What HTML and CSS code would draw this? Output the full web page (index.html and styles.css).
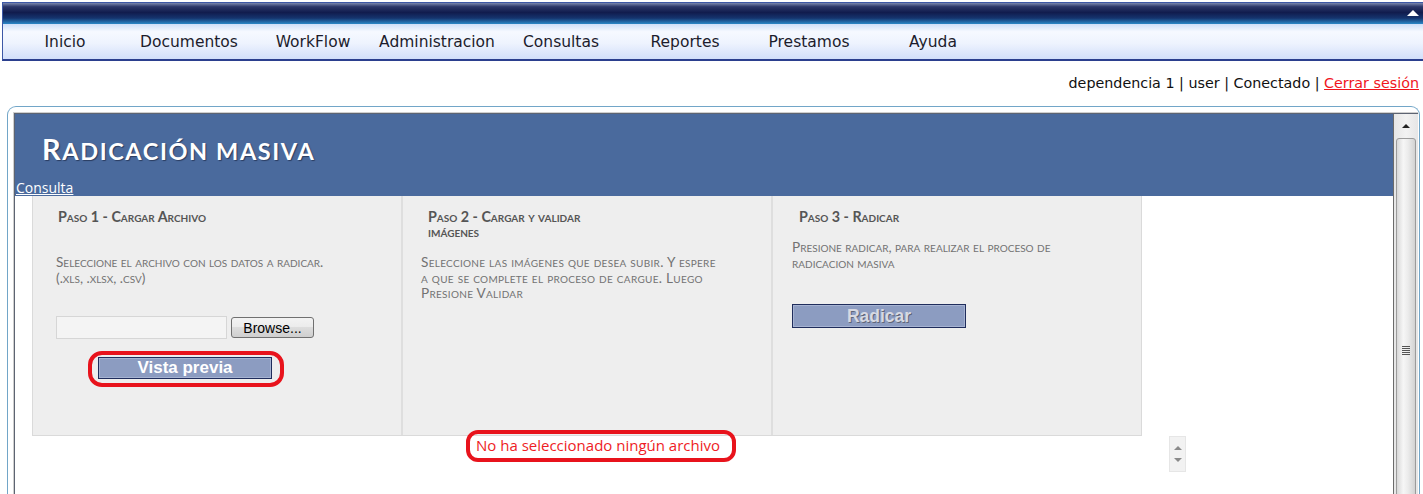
FILE: index.html
```html
<!DOCTYPE html>
<html lang="es">
<head>
<meta charset="utf-8">
<title>Radicación masiva</title>
<link rel="stylesheet" href="styles.css">
</head>
<body>
<div class="topbar">
  <div class="topbar-strip"><span class="collapse"></span></div>
  <nav class="menu">
    <a href="#">Inicio</a>
    <a href="#">Documentos</a>
    <a href="#">WorkFlow</a>
    <a href="#">Administracion</a>
    <a href="#">Consultas</a>
    <a href="#">Reportes</a>
    <a href="#">Prestamos</a>
    <a href="#">Ayuda</a>
  </nav>
</div>
<div class="userbar">dependencia 1 | user | Conectado | <a class="logout" href="#">Cerrar sesión</a></div>
<div class="panel">
  <div class="frame">
    <div class="frame-in">
      <div class="content">
        <header class="page-head">
          <h1 class="title"><span class="cap">R</span>adicación masiva</h1>
          <a class="consulta" href="#">Consulta</a>
        </header>
        <div class="steps">
          <section class="step step1">
            <h2 class="step-title">Paso 1 - Cargar Archivo</h2>
            <p class="step-desc">Seleccione el archivo con los datos a radicar.<br>(.xls, .xlsx, .csv)</p>
            <div class="file-row">
              <span class="file-box"></span>
              <button class="browse" type="button">Browse...</button>
            </div>
            <div class="annot">
              <button class="btn" type="button">Vista previa</button>
            </div>
          </section>
          <section class="step step2">
            <h2 class="step-title">Paso 2 - Cargar y validar<br>imágenes</h2>
            <p class="step-desc wide">Seleccione las imágenes que desea subir. Y espere<br>a que se complete el proceso de cargue. Luego<br>Presione Validar</p>
          </section>
          <section class="step step3">
            <h2 class="step-title">Paso 3 - Radicar</h2>
            <p class="step-desc">Presione radicar, para realizar el proceso de<br>radicacion masiva</p>
            <button class="btn btn-disabled" type="button">Radicar</button>
          </section>
        </div>
        <div class="status-row">
          <div class="msg-cell"><span class="msg">No ha seleccionado ningún archivo</span></div>
          <div class="spinner">
            <span class="sp-up"></span>
            <span class="sp-down"></span>
          </div>
        </div>
      </div>
      <div class="vscroll">
        <div class="vs-btn"><span class="vs-arrow"></span></div>
        <div class="vs-thumb"><span class="grip"></span></div>
      </div>
    </div>
  </div>
</div>
</body>
</html>
```
FILE: styles.css
```css
* { box-sizing: border-box; }
html, body { margin: 0; height: 494px; overflow: hidden; }
body { background: #fff; font-family: "DejaVu Sans", sans-serif; color: #111; }

/* ---------- top bar ---------- */
.topbar {
  margin: 2px 0 0 2px;
  border-top: 1px solid #3d58a6;
  border-left: 1px solid #3d58a6;
  border-bottom: 2px solid #2b3f8e;
}
.topbar-strip {
  height: 21px;
  background: linear-gradient(#7885ad 0, #2b3769 18%, #111c4d 45%, #15346e 72%, #2b88c8 100%);
  display: flex;
  justify-content: flex-end;
  align-items: center;
  padding-right: 4px;
}
.collapse {
  width: 0; height: 0;
  border-left: 6px solid transparent;
  border-right: 6px solid transparent;
  border-bottom: 6px solid #fff;
  margin-bottom: 2px;
}
.menu {
  height: 35px;
  padding-top: 1px;
  background: linear-gradient(#cfdff9 0, #f6f9ff 22%, #eef3fe 55%, #d2dffa 100%);
  display: grid;
  grid-template-columns: repeat(8, 124px);
  align-items: center;
}
.menu a {
  text-align: center;
  font-size: 15.5px;
  color: #1c1c2c;
  text-decoration: none;
}

/* ---------- user bar ---------- */
.userbar {
  height: 45px;
  line-height: 45px;
  text-align: right;
  padding-right: 4px;
  font-size: 14.3px;
  color: #111;
}
.logout { color: #f0151d; }

/* ---------- panel ---------- */
.panel {
  margin: 0 3px 0 7px;
  border: 1px solid #72a6c8;
  border-bottom: none;
  border-radius: 9px 9px 0 0;
  padding: 5px 1px 0 5px;
}
.frame {
  border-top: 1px solid #cfcfcf;
  border-left: 1px solid #cfcfcf;
}
.frame-in {
  display: flex;
  height: 400px;
  border-top: 1px solid #5d6472;
  border-left: 1px solid #5d6472;
}
.content { flex: 1; min-width: 0; }

.page-head {
  height: 82px;
  background: #4a6a9d;
  display: flex;
  flex-direction: column;
  align-items: flex-start;
  padding-top: 18px;
}
.title {
  margin: 0 0 0 27px;
  font-family: Lato, sans-serif;
  font-weight: 700;
  font-size: 23.5px;
  line-height: 34px;
  letter-spacing: 1.6px;
  text-transform: uppercase;
  color: #fff;
  text-shadow: 1px 1px 1px #2a3c60;
}
.title .cap { font-size: 29px; }
.consulta {
  margin-top: auto;
  margin-left: 1px;
  font-family: "Open Sans", sans-serif;
  font-size: 14px;
  line-height: 17px;
  color: #fff;
}

/* ---------- steps ---------- */
.steps {
  margin-left: 17px;
  width: 1110px;
  height: 240px;
  display: grid;
  grid-template-columns: 370px 370px 370px;
  background: #eeeeee;
  border: 1px solid #dadada;
  border-top: none;
}
.step {
  border-right: 2px solid #dedede;
  font-family: Lato, sans-serif;
}
.step:last-child { border-right: none; }
.step-title {
  margin: 13px 0 0;
  font-size: 14.3px;
  line-height: 15px;
  font-weight: 700;
  font-variant: small-caps;
  color: #555;
}
.step-desc {
  margin: 31px 0 0;
  font-size: 13.6px;
  line-height: 15.5px;
  font-variant: small-caps;
  color: #727272;
}
.step-desc.wide { letter-spacing: 0.3px; }
.step1 { padding-left: 23px; }
.step1 .step-title { margin-left: 2px; }
.step2 { padding-left: 18px; }
.step2 .step-desc { margin-top: 16px; }
.step2 .step-title { margin-left: 7px; }
.step3 { padding-left: 19px; }
.step3 .step-title { margin-left: 7px; }
.step3 .step-desc { margin-top: 16px; }

.file-row {
  margin-top: 30px;
  display: flex;
  align-items: center;
  gap: 4px;
}
.file-box {
  width: 171px;
  height: 23px;
  background: #f4f4f4;
  border: 1px solid #d6d6d6;
}
.browse {
  width: 83px;
  height: 21px;
  padding: 0;
  border: 1px solid #707070;
  border-radius: 3px;
  background: linear-gradient(#f3f3f3, #ebebeb 50%, #dddddd 50%, #cfcfcf);
  font-family: "Liberation Sans", sans-serif;
  font-size: 14px;
  color: #000;
}
.annot {
  display: inline-block;
  margin: 12px 0 0 32px;
  padding: 2px 8px 4px 6px;
  border: 4px solid #e8131c;
  border-radius: 14px;
}
.btn {
  display: block;
  width: 174px;
  height: 22px;
  padding: 0;
  background: #8c9cc1;
  border: 1px solid #1f2d5c;
  box-shadow: inset 0 0 0 1px #a6b3d2;
  font-family: "Liberation Sans", sans-serif;
  font-weight: 700;
  font-size: 17px;
  color: #fff;
}
.btn-disabled {
  margin-top: 33px;
  height: 24px;
  font-size: 17.5px;
  color: #d7d9e2;
  text-shadow: 1px 1px 0 #5f6678;
}

/* ---------- status row ---------- */
.status-row {
  display: grid;
  grid-template-columns: 461px 693px 17px;
}
.msg-cell { grid-column: 2; line-height: 18px; }
.msg {
  position: relative;
  display: inline-block;
  font-family: "Open Sans", sans-serif;
  font-size: 15px;
  color: #ee1c24;
}
.msg::after {
  content: "";
  position: absolute;
  left: -10px; right: -16px; top: -6px; bottom: -8px;
  border: 4px solid #e8131c;
  border-radius: 12px;
}
.spinner {
  grid-column: 3;
  height: 36px;
  background: #f2f2f2;
  border: 1px solid #e6e6e6;
  display: flex;
  flex-direction: column;
  align-items: center;
  justify-content: center;
  gap: 8px;
}
.sp-up, .sp-down {
  width: 0; height: 0;
  border-left: 4px solid transparent;
  border-right: 4px solid transparent;
}
.sp-up { border-bottom: 4px solid #8a8a8a; }
.sp-down { border-top: 4px solid #8a8a8a; }

/* ---------- scrollbar ---------- */
.vscroll {
  width: 25px;
  flex: none;
  border-left: 1px solid #6b6b6b;
  background: linear-gradient(90deg, #e6e6e6, #f2f2f2 50%, #e6e6e6);
  overflow: hidden;
}
.vs-btn {
  height: 23px;
  display: flex;
  align-items: center;
  justify-content: center;
}
.vs-arrow {
  width: 0; height: 0;
  border-left: 4px solid transparent;
  border-right: 4px solid transparent;
  border-bottom: 4px solid #222;
}
.vs-thumb {
  height: 424px;
  margin: 1px 2px 0;
  border: 1px solid #9b9b9b;
  border-radius: 3px;
  background: linear-gradient(90deg, #d8d8d8, #f6f6f6 35%, #ececec 60%, #d2d2d2);
  display: flex;
  align-items: center;
  justify-content: center;
}
.grip {
  width: 8px;
  height: 9px;
  background: repeating-linear-gradient(#555 0 1px, transparent 1px 2px);
}
```
